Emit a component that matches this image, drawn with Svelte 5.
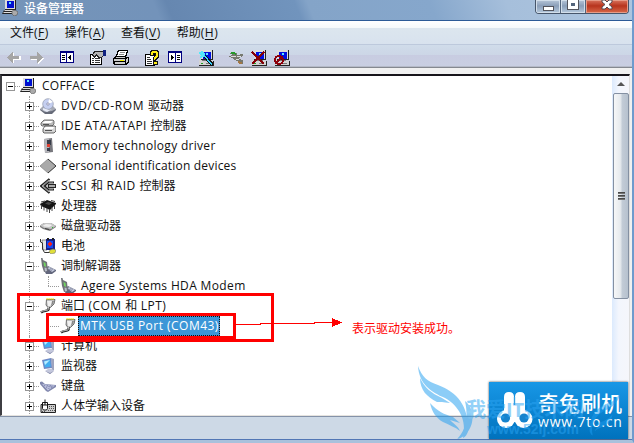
<script lang="ts">
    const menus = [
        { label: "文件", key: "F" },
        { label: "操作", key: "A" },
        { label: "查看", key: "V" },
        { label: "帮助", key: "H" },
    ];

    const toolGroups = [
        ["back", "forward"],
        ["tree"],
        ["properties", "print"],
        ["help", "pane"],
        ["scan"],
        ["update", "uninstall", "disable"],
    ];

    // tracking is the letter spacing of the latin part, in pixels
    const devices = [
        { label: "DVD/CD-ROM 驱动器", icon: "disc", tracking: 0.65 },
        { label: "IDE ATA/ATAPI 控制器", icon: "ide", tracking: 0.42 },
        { label: "Memory technology driver", icon: "memory", tracking: 0.3 },
        { label: "Personal identification devices", icon: "diamond", tracking: 0.19 },
        { label: "SCSI 和 RAID 控制器", icon: "scsi", tracking: 0.55 },
        { label: "处理器", icon: "cpu" },
        { label: "磁盘驱动器", icon: "disk" },
        { label: "电池", icon: "battery" },
        { label: "调制解调器", icon: "modem", open: true },
        { label: "Agere Systems HDA Modem", icon: "modem", child: true, tracking: 0.36 },
        { label: "端口 (COM 和 LPT)", icon: "port", open: true, tracking: 0.45 },
        { label: "MTK USB Port (COM43)", icon: "port", child: true, selected: true, tracking: 0.48 },
        { label: "计算机", icon: "monitor" },
        { label: "监视器", icon: "monitor" },
        { label: "键盘", icon: "keyboard" },
        { label: "人体学输入设备", icon: "hid" },
    ];

    /**
     * Split a label into its latin and chinese runs
     */
    function splitLabel(label: string): string[] {
        return label.split(/([\u4e00-\u9fff]+)/).filter((part) => part);
    }

    function isLatin(part: string): boolean {
        return /^[\x20-\x7e]+$/.test(part);
    }
</script>

{#snippet computer()}
    <path d="M3 0h12v10H3z" fill="#222" />
    <path d="M3 0h11v9H3z" fill="#dcdcdc" />
    <path d="M5 2h8v7H5z" fill="#0010e0" />
    <path d="M8 3h2v2H8z" fill="#5ce8ff" />
    <path d="M1 11h15v5H1z" fill="#222" />
    <path d="M1 10h13v1H1zM1 11h14v4H1z" fill="#d4d4d4" />
    <path d="M4 10h8v1H4z" fill="#777" />
    <path d="M3 13h2v1H3z" fill="#20a020" />
    <path d="M8 13h5v1H8z" fill="#777" />
{/snippet}

{#snippet toolIcon(name: string)}
    <svg class="icon" viewBox="0 0 16 16" shape-rendering="crispEdges">
        {#if name === "back"}
            <path d="M2 8l6-5v3h7v4H8v4z" fill="#fff" />
            <path d="M1 7.5L7 2v4h6v3H7v4z" fill="#a5a5a5" />
        {:else if name === "forward"}
            <path d="M15 8L9 3v3H2v4h7v4z" fill="#fff" />
            <path d="M14 7.5L8 2v4H1v3h7v4z" fill="#a5a5a5" />
        {:else if name === "tree" || name === "pane"}
            <path d="M1 1h14v12H1z" fill="#000080" />
            {#if name === "tree"}
                <path d="M2 3h5v9H2zM8 3h6v9H8z" fill="#fff" />
                <path d="M3 5h3v1H3zM3 7h3v1H3zM3 9h3v1H3zM12 4v7L9 7.5z" fill="#000" />
            {:else}
                <path d="M2 3h6v9H2zM9 3h5v9H9z" fill="#fff" />
                <path d="M10 5h3v1h-3zM10 7h3v1h-3zM10 9h3v1h-3zM4 4v7l3-3.5z" fill="#000" />
            {/if}
        {:else if name === "properties"}
            <path d="M0 4h12v11H0z" fill="#000" />
            <path d="M1 5h10v9H1z" fill="#fff" />
            <path d="M2 8h2v1H2zM5 8h5v1H5zM2 10h2v1H2zM5 10h5v1H5zM2 12h2v1H2zM5 12h5v1H5z" fill="#333" />
            <path d="M4 1h9v5l-2 2H8L6 6 4 8 2 6z" fill="#222" />
            <path d="M5 2h8v3l-2 2H9L7 4 4 6 3 5z" fill="#b5b5b5" />
            <path d="M13 0h3v6h-3z" fill="#102080" />
        {:else if name === "print"}
            <path d="M5 0h10v2l-2 5h3v5l-3 3H1l-1-1V8l2-2h1z" fill="#000" />
            <path d="M6 1h8l-2 5H4z" fill="#fff" />
            <path d="M7 2h5v1H7zM6 4h5v1H6z" fill="#888" />
            <path d="M3 7h9v1H2zM1 9h11v2H1zM2 12h10v2H2zM13 9l2-1v3l-2 2z" fill="#ccc" />
            <path d="M7 10h4v1H7z" fill="#f4f000" />
        {:else if name === "help"}
            <path d="M1 4h10v12H1z" fill="#000" />
            <path d="M2 5h8v10H2z" fill="#fff" />
            <path d="M3 7h3v1H3zM3 9h4v1H3zM3 11h5v1H3zM3 13h5v1H3z" fill="#333" />
            <path d="M6 1l2-1h5l2 2v5l-3 3v1h2v4H9V8l2-3V4h-1v2H6z" fill="#111" />
            <path d="M7 2l2-1h4l1 2v3l-3 4H10V8l2-3V3H9v2H7zM10 12h3v2h-3z" fill="#ffee16" />
        {:else if name === "scan"}
            {@render computer()}
            <path d="M4 5l2-2 9 10v3h-2z" fill="#111" />
            <path d="M5 5l1-1 8 10v1h-1z" fill="#36cfff" />
            <path d="M0 3l4-2 3 3-1 3-4 1 1-3z" fill="#53e8fb" />
        {:else if name === "update"}
            <path d="M1 3l4-1 4 1v2l6-1v2l-3 1-1 2 4 1v4h-4l-1-3-4-1-1-2-4-1V6l4-1z" fill="#77796f" />
            <path d="M1 3l4-1 3 1v2L5 4z" fill="#279a2a" />
            <path d="M3 6h5v1H3zM9 6h4v1H9zM8 9h3v1H8z" fill="#ddd" />
            <path d="M10 11l4 1v2h-3z" fill="#a27745" />
        {:else if name === "uninstall"}
            {@render computer()}
            <path d="M1 2l12 12M13 2L1 14" stroke="#850006" stroke-width="2" />
        {:else if name === "disable"}
            {@render computer()}
            <circle cx="5" cy="10" r="4" fill="none" stroke="#8d000b" stroke-width="2" />
            <path d="M2 13l6-6" stroke="#8d000b" stroke-width="2" />
        {/if}
    </svg>
{/snippet}

{#snippet deviceIcon(name: string)}
    <svg class="icon" viewBox="0 0 16 16">
        {#if name === "root"}
            <path d="M3 0h11v10H3z" fill="#222" />
            <path d="M3 0h10v9H3z" fill="#dcdcdc" />
            <path d="M5 1h7v7H5z" fill="#0010d0" />
            <path d="M7 2h2v2H7z" fill="#5ce8ff" />
            <path d="M2 10h11l2 4H0z" fill="#222" />
            <path d="M3 10h9v1H2zM2 12h10v1H1z" fill="#ddd" />
            <path d="M10 11l3-1 3 2-1 3-3 1-2-2z" fill="#aaa" stroke="#555" stroke-width="0.6" />
        {:else if name === "disc"}
            <path d="M0 11l3-3h10l3 3-4 4H5z" fill="#a6aab5" />
            <path d="M0 11l5 3 7-1 4-2v1l-4 4H5l-5-4z" fill="#666b79" />
            <circle cx="8" cy="6" r="5.3" fill="#c5cff0" stroke="#9299ae" stroke-width="0.7" />
            <path d="M8 6l1-5 4 3z" fill="#fff" />
            <circle cx="8" cy="6" r="1.2" fill="#fff" stroke="#65668d" stroke-width="0.6" />
            <path d="M3 10l6 2 3-1-5 3-4-2z" fill="#e8ecf8" />
        {:else if name === "ide"}
            <path d="M1 5l3-3h9l1 1v3l-2 2H2L1 7z" fill="#bbb" stroke="#555" stroke-width="0.8" />
            <path d="M3 11l2-3h10l1 1v4l-2 2H4l-1-1z" fill="#d5d5d5" stroke="#444" stroke-width="0.8" />
            <path d="M2 5l3-2h8l-2 2zM4 10l2-1h8l-1 2H4z" fill="#fff" />
            <path d="M5 12h7v1H5zM3 6h6v1H3z" fill="#555" />
        {:else if name === "memory"}
            <path d="M4 1l8-1 1 14-8 1z" fill="#77777d" />
            <path d="M4 1l5-.5V14l-4 1z" fill="#b5b5ba" />
            <path d="M7 2h4v5H7zM7 10h3v3H7z" fill="#383d4a" />
            <path d="M7 6h3v3H7z" fill="#de4032" />
        {:else if name === "diamond"}
            <path d="M0 8l8-7 8 7-8 7z" fill="#a9a9a9" />
            <path d="M8 1L0 8l8 7" fill="none" stroke="#888" stroke-width="0.8" />
            <path d="M8 1l8 7-8 7" fill="none" stroke="#333" />
        {:else if name === "scsi"}
            <path d="M9.5 1L1 8l8.500 7M14 4.500H9L5 8l4 3.500h5" fill="none" stroke="#222" stroke-width="2.200" />
            <path d="M9 2L2 8l7 6M13 5H9.500L6 8l3.500 3H13" fill="none" stroke="#aaa" />
            <path d="M8 6h8v4H8z" fill="#222" />
            <path d="M9 7.200h6v1.600H9z" fill="#ccc" />
        {:else if name === "cpu"}
            <path d="M0 6l7-4 9 3v1l-6 6-9-4z" fill="#161616" />
            <path d="M1.500 7v4M4 9v3.500M7 10v4M9.500 11v4M12 9v4M14.500 7v4M1 4l4-1M11 2.500l4 1" stroke="#444" />
            <path d="M5 5.500l3-1.500 4 1-3 2z" fill="#484848" />
        {:else if name === "disk"}
            <path d="M0 7.500L4 5h7l5 3v1l-6 4-7-2-3-2z" fill="#7c7c7c" />
            <path d="M0 7.500L4 5h7l5 3-5 3-7-1z" fill="#c4c4c4" />
            <path d="M3 7.500l3-1.500 5 .5 1 1-3 1.500-5-.5z" fill="#eee" />
            <path d="M5 10.500l4 1" stroke="#444" />
            <path d="M12 9h1v1h-1z" fill="#30c030" />
        {:else if name === "battery"}
            <path d="M2 2h5v10H3z" fill="#e2e2e2" stroke="#666" stroke-width="0.700" />
            <path d="M.5 1v3l2 1v6l2 3.500h6" fill="none" stroke="#333" />
            <path d="M6 1h9v11H6z" fill="#17208a" />
            <path d="M7 3h6v7H7z" fill="#1848f0" />
            <path d="M9 4h2v4H9zM8 5h4v2H8z" fill="#f02020" />
            <path d="M10 12l3-1 3 1-1 3-4 1-2-2z" fill="#e0df3a" stroke="#777" stroke-width="0.600" />
            <path d="M7 0h2v2H7zM12 0h2v2h-2z" fill="#222" />
        {:else if name === "modem"}
            <path d="M4 12l4-4 8 4v1l-4 3H6z" fill="#62667c" />
            <path d="M7 10l3-1 5 3-3 2z" fill="#c4c9dc" />
            <path d="M8 11l4 1.500M10 10l3 1.500" stroke="#777c94" stroke-width="0.700" />
            <path d="M1 0h1.500l.5 2 4 2 1 9-4 1-2-6z" fill="#6f7278" />
            <path d="M3.500 4l2 1 .5 4-2-1z" fill="#71d460" />
            <path d="M4.500 9.500l2 .5.500 3-2 .5z" fill="#b9bccb" />
        {:else if name === "port"}
            <path d="M6.500 1.500H15L14 6l-3.500 3.500H8L6 7z" fill="#bdbdbd" stroke="#555" stroke-width="0.800" />
            <path d="M7 3h7l-1 2-3 3H8z" fill="#f1f1f1" />
            <path d="M12 3h2l-1 3-2 2z" fill="#888" />
            <path d="M6.500 1h8" stroke="#f2df00" stroke-width="1.500" stroke-dasharray="1.200 0.800" />
            <path d="M8.500 9.500c1 5-4 2-7.500 5" fill="none" stroke="#222" stroke-width="2.400" />
            <path d="M8.500 9c1 5-4 2.500-7.500 5" fill="none" stroke="#d8d8d8" stroke-width="0.900" />
        {:else if name === "monitor"}
            <path d="M11 0l3 1v11l-2 2z" fill="#9fa4bd" />
            <path d="M2 2l9-2 1 10-8 1z" fill="#7088c4" />
            <path d="M3.500 3L10 1.500l.8 7L5 9.500z" fill="#42aef0" />
            <path d="M4 3.500l6-1.500-5 5z" fill="#b9edff" />
            <path d="M5 13l3-2h4l2 2-4 3z" fill="#c3c7dc" />
            <path d="M5 13l5 2 4-2-4 3z" fill="#8489a7" />
        {:else if name === "keyboard"}
            <path d="M0 4l2-.5 3 2.500 11 1v2l-8 5-2-1-6-7z" fill="#8288ae" />
            <path d="M2 6l3 .5 10 1-7 5z" fill="#c3c8e4" />
            <path d="M4 7.500l8 2M6 9.500l4 1.500M7 7.500l5 1M10 7.500l3 .8" stroke="#7379a5" stroke-width="0.800" stroke-dasharray="1.200 0.600" />
        {:else if name === "hid"}
            <path d="M1 6.500h14.500v8H1z" fill="#ccc" stroke="#222" />
            <path d="M9 8.500h6M9 10.500h6M8 12.500h7M2 13.500h4" stroke="#555" stroke-dasharray="1 1" />
            <path d="M2.500 4.500h5v6l-1 1.500h-3l-1-1.500z" fill="#fff" stroke="#111" />
            <path d="M3 7h4M5 1.500V7" fill="none" stroke="#111" />
        {/if}
    </svg>
{/snippet}

{#snippet deviceLabel(label: string, tracking = 0)}
    {#each splitLabel(label) as part}<span style:letter-spacing={isLatin(part) ? `${tracking}px` : null}>{part}</span>{/each}
{/snippet}

<div class="window">
    <div class="main">
        <header class="titlebar">
            {@render deviceIcon("root")}
            <span class="title">设备管理器</span>
            <div class="controls">
                <span class="control"><i class="min"></i></span>
                <span class="control"><i class="max"></i></span>
                <span class="control close">
                    <svg viewBox="0 0 12 11"><path d="M1 1h3l2 2 2-2h3v2L8 5.500 11 8v2H8L6 8l-2 2H1V8l3-2.500L1 3z" fill="#fff" stroke="#564850" /></svg>
                </span>
            </div>
        </header>

        <nav class="menubar">
            {#each menus as menu}
                <span>{menu.label}<span class="key">(<u>{menu.key}</u>)</span></span>
            {/each}
        </nav>

        <div class="toolbar">
            {#each toolGroups as group}
                <div class="group">
                    {#each group as name}
                        {@render toolIcon(name)}
                    {/each}
                </div>
            {/each}
        </div>

        <div class="content">
            <div class="tree">
                <div class="row root">
                    <span class="expander open"></span>
                    <span class="dots"></span>
                    {@render deviceIcon("root")}
                    <span class="label">COFFACE</span>
                </div>
                {#each devices as device}
                    <div class="row" class:child={device.child}>
                        {#if !device.child}
                            <span class="expander" class:open={device.open}></span>
                        {/if}
                        <span class="dots"></span>
                        {@render deviceIcon(device.icon)}
                        <span class="label" class:selected={device.selected}>{@render deviceLabel(device.label, device.tracking)}</span>
                    </div>
                {/each}
            </div>
            <div class="scrollbar">
                <i class="up"></i>
                <div class="thumb"><i></i><i></i><i></i></div>
            </div>
        </div>
        <footer class="statusbar"></footer>
    </div>

    <!-- annotations over the tree -->
    <div class="mark outer"></div>
    <div class="mark inner"></div>
    <svg class="arrow" viewBox="0 0 108 12" shape-rendering="crispEdges">
        <path d="M0 6.500h26M25 5.500h55M79 4.500h20" stroke="#f00" />
        <path d="M97 0l10 4.500L97 9z" fill="#f00" />
    </svg>
    <span class="note">表示驱动安装成功。</span>

    <div class="brand">
        <svg viewBox="0 0 36 40">
            <path d="M7 22V6q0-5 5-5t5 5v16zM18 22V6q0-5 5-5t5 5v16z" fill="#fff" />
            <path d="M17 6v14M18 6v14" stroke="#5eb4e8" stroke-width="0.500" />
            <path d="M10 14h15l5 8-8 9h-8l-8-9z" fill="#fff" />
            <circle cx="9" cy="28" r="9" fill="#fff" />
            <circle cx="26.500" cy="28" r="9" fill="#fff" />
            <circle cx="8.500" cy="27" r="4.600" fill="#1683cd" />
            <circle cx="27" cy="27" r="4.600" fill="#1683cd" />
        </svg>
        <div class="brand-text">
            <b>奇兔刷机</b>
            <span>www.7to.cn</span>
        </div>
    </div>

    <div class="watermark">
        <svg class="wing" viewBox="0 0 56 73">
            <path d="M0 0c4 11 9 15 20 19 19 7 31 21 30 46-1 4-3 6-5 7 4-18-4-32-18-40C13 26 1 18 0 0z" />
            <path d="M2 12c5 10 11 15 22 20l8 5c-7-1-10-1-13-1C9 31 2 24 2 12z" />
            <path d="M12 37c8 9 14 11 23 14l7 6-10-3c4 4 8 6 10 11-5-4-11-6-17-9-7-4-11-10-13-19z" />
            <path d="M47 35c8 6 10 19 4 29-3 5-7 8-12 9 8-8 12-20 8-38z" />
        </svg>
        <div class="watermark-text">
            <b>我爱IT技术网</b>
            <span>www.52ij.com</span>
        </div>
        <svg class="wing small" viewBox="0 0 56 73">
            <path d="M0 0c4 11 9 15 20 19 19 7 31 21 30 46-1 4-3 6-5 7 4-18-4-32-18-40C13 26 1 18 0 0z" />
            <path d="M12 37c8 9 14 11 23 14l7 6-10-3c4 4 8 6 10 11-5-4-11-6-17-9-7-4-11-10-13-19z" />
        </svg>
    </div>
</div>

<style>
    :global(body) {
        margin: 0;
    }

    .window {
        position: relative;
        width: 634px;
        height: 443px;
        overflow: hidden;
        box-sizing: border-box;
        border-right: 2px solid #6f9bcd;
        border-bottom: 3px solid #a9c1dc;
        font: 12px "Open Sans", "Noto Sans CJK SC", sans-serif;
        color: #111;
        background: #f1f1f1;
    }

    .main {
        display: flex;
        flex-direction: column;
        height: 440px;
    }

    .icon {
        display: block;
        width: 16px;
        height: 16px;
        flex: none;
    }

    .titlebar {
        display: flex;
        height: 20px;
        flex: none;
        margin-right: -2px;
        border-bottom: 1px solid #2c5b96;
        background: linear-gradient(68deg, #7594b8 0%, #7393ba 25%, #6687b0 27%, #7194bd 47%, #84a4c8 49%, #86a7cc 68%, #a6bfdb 80%, #adc5df 100%);
    }

    .titlebar > .icon {
        margin-left: 2px;
    }

    .title {
        margin-left: 6px;
        font-weight: 500;
        line-height: 17px;
        color: #fff;
    }

    .controls {
        display: flex;
        box-sizing: border-box;
        width: 94px;
        height: 14px;
        margin-left: auto;
        margin-right: 5px;
        border: 1px solid #46556a;
        border-top: 0;
        border-radius: 0 0 4px 4px;
        overflow: hidden;
    }

    .control {
        display: flex;
        width: 24px;
        justify-content: center;
        align-items: flex-start;
        border-right: 1px solid #53647b;
        background: linear-gradient(#b7c6d8, #8a9eb8 45%, #b5c9dd);
        box-shadow: inset 0 0 0 1px #d2deea;
    }

    .control.close {
        width: 42px;
        border: 0;
        background: linear-gradient(#d9745e, #b7341d 45%, #d8694a);
        box-shadow: inset 0 0 0 1px #e69b87;
    }

    .close svg {
        width: 12px;
        height: 11px;
        margin-top: -1px;
    }

    .min {
        width: 9px;
        height: 3px;
        margin-top: 6px;
        border: 1px solid #53545c;
        background: #fff;
    }

    .max {
        width: 4px;
        height: 3px;
        border: 3px solid #fff;
        outline: 1px solid #53545c;
        background: #53647b;
    }

    .menubar {
        display: flex;
        gap: 16px;
        height: 23px;
        flex: none;
        padding-left: 10px;
        border-bottom: 1px solid #bdc9dc;
        line-height: 24px;
        background: linear-gradient(#fff 0, #f5f9fa 7px, #dce6ee 7px, #d8e2ee 100%);
    }

    .menubar u {
        text-underline-offset: 2px;
    }

    .key {
        letter-spacing: 0.5px;
    }

    .toolbar {
        display: flex;
        gap: 14px;
        height: 17px;
        flex: none;
        padding: 5px 0 0 6px;
        border-bottom: 1px solid #858990;
        box-shadow: inset 0 -1px #b5bac8;
        background: linear-gradient(#d0dcea 0, #ccd6e6 10px, #c8cce1 10px, #c9cfe2 100%);
    }

    .group {
        display: flex;
        gap: 7px;
    }

    .group:nth-child(3),
    .group:nth-child(4),
    .group:nth-child(5) {
        margin-left: 1px;
    }

    .content {
        display: flex;
        height: 339px;
        flex: none;
        margin-top: 6px;
        margin-right: 2px;
        border-top: 2px solid #17151b;
        border-left: 2px solid #3e3e42;
        border-right: 1px solid #dedede;
        border-bottom: 1px solid #e5e3df;
        background: #fff;
    }

    .tree {
        flex: 1;
        overflow: hidden;
    }

    .row {
        position: relative;
        display: flex;
        align-items: center;
        height: 20px;
        padding-left: 23px;
    }

    .row:not(.root)::before {
        content: "";
        position: absolute;
        left: 27px;
        top: 0;
        height: 20px;
        border-left: 1px dotted #999;
    }

    .row.root {
        padding-left: 4px;
    }

    .row.child {
        padding-left: 46px;
    }

    .row.child::after {
        content: "";
        position: absolute;
        left: 46px;
        top: 0;
        height: 10px;
        border-left: 1px dotted #999;
    }

    .expander {
        position: relative;
        width: 7px;
        height: 7px;
        border: 1px solid #969696;
        background:
            linear-gradient(#000, #000) center / 5px 1px no-repeat,
            linear-gradient(#000, #000) center / 1px 5px no-repeat,
            #fff;
    }

    .expander.open {
        background:
            linear-gradient(#000, #000) center / 5px 1px no-repeat,
            #fff;
    }

    .dots {
        width: 5px;
        margin-right: 1px;
        border-top: 1px dotted #999;
    }

    .root .dots {
        margin-right: 0;
    }

    .child .dots {
        width: 11px;
    }

    .label {
        margin-left: 4px;
        padding: 0 1px;
        line-height: 18px;
        white-space: pre;
    }

    .root .label {
        margin-left: 5px;
        letter-spacing: 0.25px;
    }

    .label.selected {
        margin-left: 2px;
        padding: 0 1px 0 2px;
        outline: 1px dotted #111;
        outline-offset: -1px;
        line-height: 20px;
        color: #fff;
        background: #3c96d7;
    }

    .scrollbar {
        display: flex;
        flex-direction: column;
        width: 17px;
        background: linear-gradient(90deg, #dceafd, #f3f6fd 40%, #f5f6fb);
    }

    .up {
        height: 0;
        margin: 6px auto 7px;
        border: 4px solid transparent;
        border-top: 0;
        border-bottom-color: #555;
    }

    .thumb {
        display: flex;
        flex-direction: column;
        align-items: center;
        justify-content: center;
        gap: 1px;
        box-sizing: border-box;
        height: 206px;
        margin-left: 1px;
        border: 1px solid #8490a2;
        border-radius: 2px;
        background: linear-gradient(90deg, #f6f7f8, #e6eaee 45%, #c2cbd6 60%, #b6c1ce);
    }

    .thumb i {
        width: 7px;
        height: 2px;
        background: linear-gradient(#333, #888);
    }

    .statusbar {
        height: 22px;
        flex: none;
        margin-top: auto;
        border-top: 1px solid #8492a8;
        border-bottom: 1px solid #5277b5;
        background: #cdd9e6;
    }

    .mark {
        position: absolute;
        box-sizing: border-box;
        border: 3px solid #f00;
    }

    .outer {
        left: 17px;
        top: 293px;
        width: 257px;
        height: 49px;
    }

    .inner {
        left: 46px;
        top: 313px;
        width: 190px;
        height: 26px;
    }

    .arrow {
        position: absolute;
        left: 235px;
        top: 318px;
        width: 108px;
        height: 12px;
    }

    .note {
        position: absolute;
        left: 352px;
        top: 320px;
        line-height: 17px;
        color: #f00;
    }

    .brand {
        position: absolute;
        left: 489px;
        top: 382px;
        display: flex;
        width: 139px;
        height: 57px;
        color: #fff;
        background: linear-gradient(#1897e6, #0072bd);
        box-shadow: 0 0 2px #444;
    }

    .brand > svg {
        width: 36px;
        height: 40px;
        margin: 9px 5px 0 8px;
    }

    .brand-text {
        display: flex;
        flex-direction: column;
        padding-top: 10px;
    }

    .brand-text b {
        font-size: 21px;
        font-weight: 500;
        line-height: 22px;
    }

    .brand-text span {
        font-size: 14px;
        line-height: 15px;
        letter-spacing: 0.8px;
    }

    .watermark {
        position: absolute;
        left: 418px;
        top: 366px;
        display: flex;
        color: #2ba4f3;
        opacity: 0.5;
    }

    .wing {
        width: 56px;
        height: 73px;
        fill: #1c9cf0;
    }

    .wing.small {
        width: 34px;
        height: 48px;
        margin-top: 24px;
        transform: scaleX(-1);
    }

    .watermark-text {
        display: flex;
        flex-direction: column;
        width: 120px;
        margin-left: -8px;
        padding-top: 32px;
        white-space: nowrap;
    }

    .watermark-text b {
        font-size: 20px;
        line-height: 24px;
    }

    .watermark-text span {
        margin: -1px 0 0 21px;
        font: bold 14px/16px "Liberation Sans", sans-serif;
    }
</style>
